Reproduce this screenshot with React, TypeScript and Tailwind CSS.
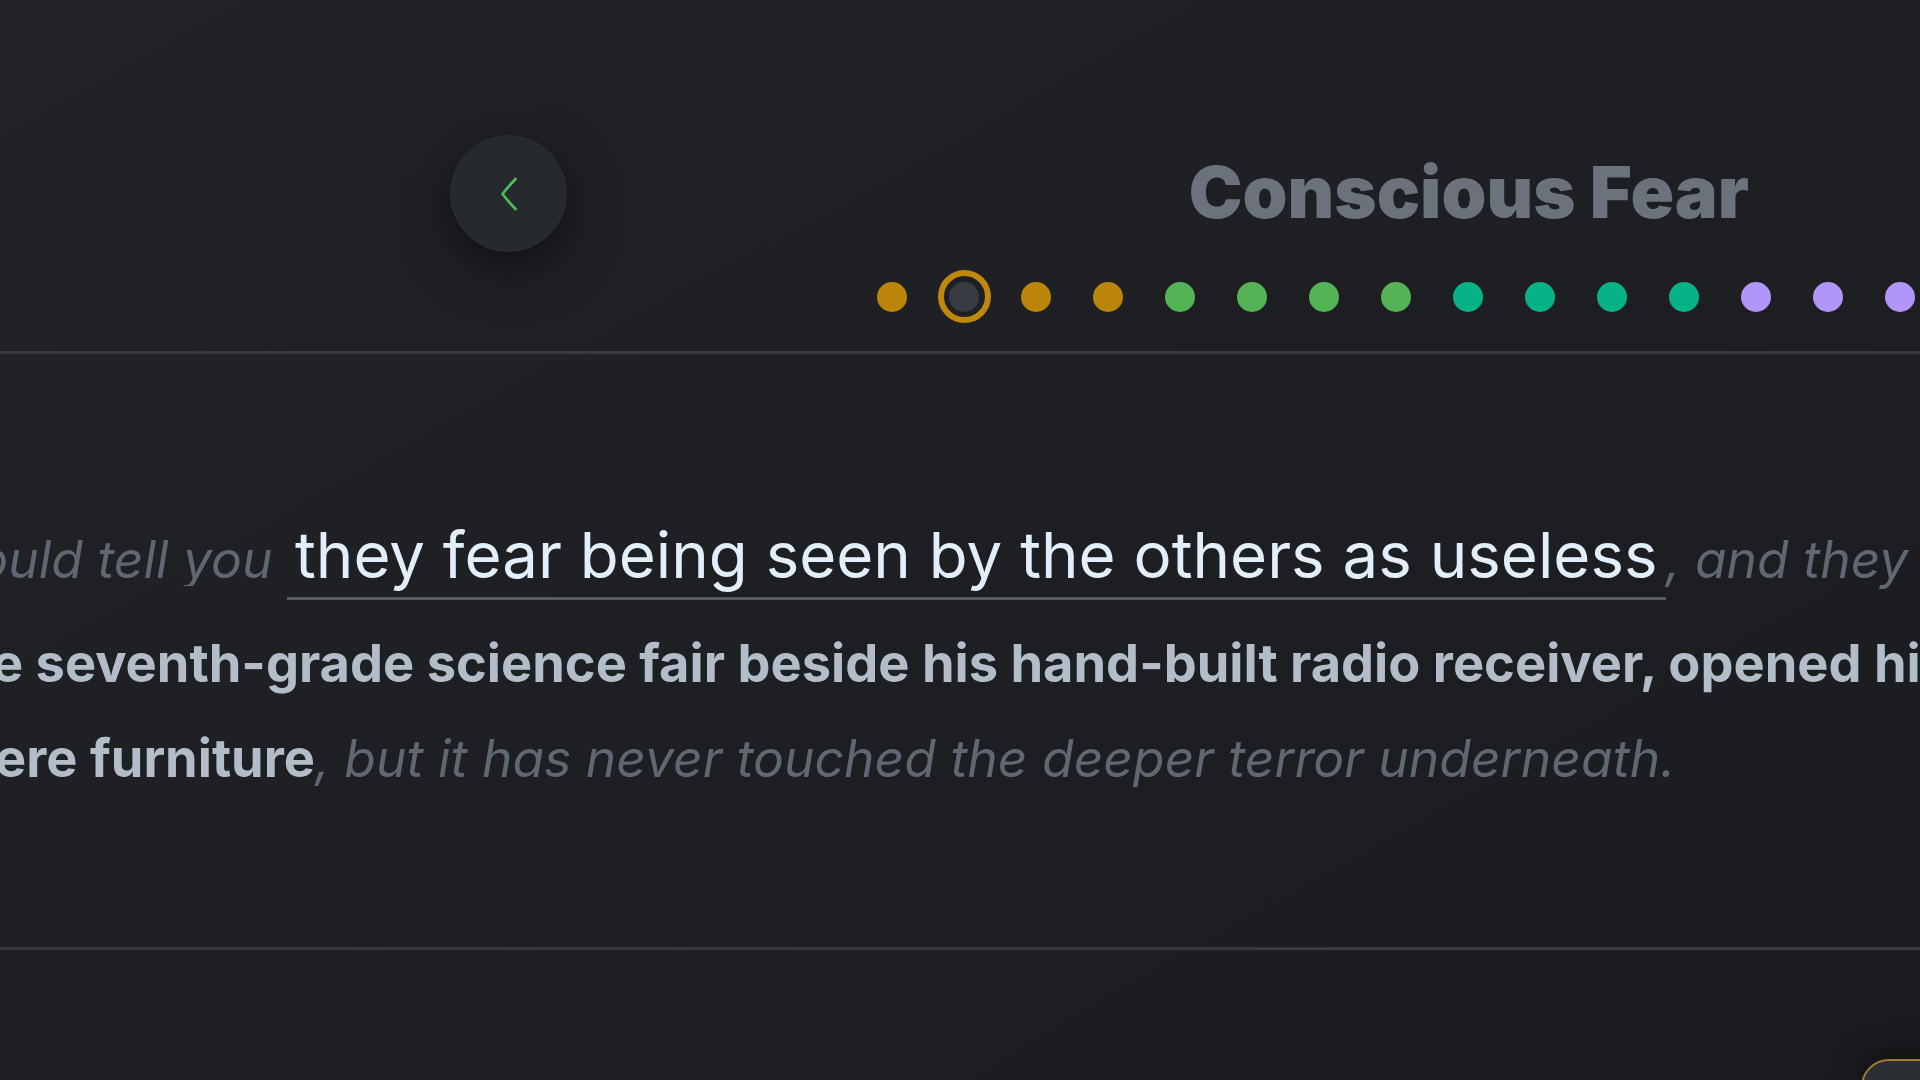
import React from "react"

const dots = [
  "gold", "ring", "gold", "gold",
  "green", "green", "green", "green",
  "teal", "teal", "teal", "teal",
  "purple", "purple", "purple", "purple",
]

const dotColor: Record<string, string> = {
  gold: "bg-[#bc860a]",
  green: "bg-[#55b556]",
  teal: "bg-[#06b286]",
  purple: "bg-[#b195f8]",
}

function Dot({ kind }: { kind: string }) {
  if (kind === "ring") {
    return (
      <div className="w-[53px] h-[53px] rounded-full border-[6px] border-[#bf870b] flex items-center justify-center">
        <div className="w-[30px] h-[30px] rounded-full bg-[#383c42]" />
      </div>
    )
  }
  return <div className={`w-[30px] h-[30px] rounded-full ${dotColor[kind]}`} />
}

export default function App() {
  return (
    <div className="relative w-[1920px] h-[1080px] overflow-hidden bg-gradient-to-br from-[#212327] via-[#1d1f23] to-[#1a1c1f] font-['Inter',sans-serif]">
      {/* header */}
      <div className="flex h-[354px] border-b-[3px] border-[#363a3f]">
        <div className="pl-[450px] pt-[135px]">
          <button className="w-[117px] h-[117px] rounded-full bg-[#26292d] border border-[#2b2e33] shadow-[0_14px_50px_rgba(0,0,0,0.55)] flex items-center justify-center">
            <svg width="22" height="36" viewBox="0 0 22 36" fill="none">
              <path d="M17.5 3 Q10 11 4.5 18 Q10 25 17.5 33" stroke="#4cc05a" strokeWidth="2.6" strokeLinecap="round" strokeLinejoin="round" />
            </svg>
          </button>
        </div>
        <div className="ml-[289px] flex-1 min-w-0 pt-[156px] flex flex-col">
          <div className="flex justify-end pr-[171px]">
            <h1 className="text-[72px] leading-none font-black text-[#6b727c]">Conscious Fear</h1>
          </div>
          <div className="flex items-center mt-[42px] h-[53px]">
            {dots.map((d, i) => (
              <div key={i} className="w-[72px] shrink-0 flex justify-center">
                <Dot kind={d} />
              </div>
            ))}
          </div>
        </div>
      </div>

      {/* passage */}
      <div className="h-[596px] border-b-[3px] border-[#363a3f] pt-[169px] whitespace-nowrap">
        <div className="flex items-baseline">
          <div className="w-[287px] shrink-0 flex justify-end overflow-hidden">
            <span className="text-[51.6px] leading-none italic text-[#5f6770]">most people would tell you&nbsp;</span>
          </div>
          <span className="inline-block px-2 pb-[10px] border-b-[3px] border-[#555b63] text-[63.6px] leading-none text-[#e3eefb]">
            they fear being seen by the others as useless
          </span>
          <span className="text-[51.6px] leading-none italic text-[#5f6770]">, and they would be right</span>
        </div>
        <div className="mt-[37px] -ml-[60px] text-[52.4px] leading-none font-bold text-[#b3bdc9]">
          the seventh-grade science fair beside his hand-built radio receiver, opened his notebook
        </div>
        <div className="mt-[43px] flex items-baseline justify-end pr-[245px] leading-none">
          <span className="text-[52.4px] font-bold text-[#b3bdc9]">fear of being mere furniture</span>
          <span className="text-[51.6px] italic text-[#5f6770]">, but it has never touched the deeper terror underneath.</span>
        </div>
      </div>

      {/* floating control, mostly off screen */}
      <div className="absolute left-[1861px] top-[1059px] w-[220px] h-[90px] rounded-[28px] border-2 border-[#a27a2d] bg-[#2b2f34] shadow-[0_-6px_30px_rgba(0,0,0,0.5)]" />
    </div>
  )
}
